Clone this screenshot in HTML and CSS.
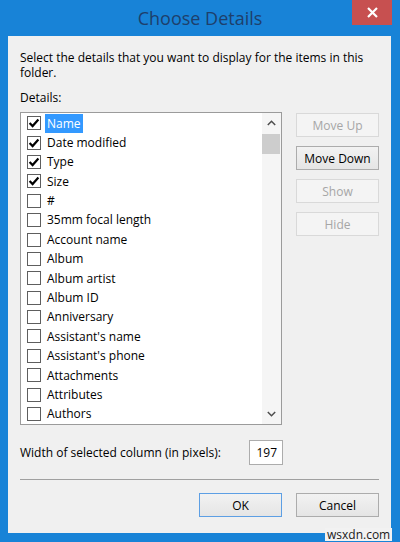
FILE: index.html
```html
<!DOCTYPE html>
<html>
<head>
<meta charset="utf-8">
<title>Choose Details</title>
<link rel="stylesheet" href="styles.css">
</head>
<body>
<div class="window">
  <div class="titlebar">
    <div class="title">Choose Details</div>
    <div class="close">
      <svg width="11" height="11" viewBox="0 0 11 11"><path d="M1 1 L10 10 M10 1 L1 10" stroke="#fff" stroke-width="2.2" fill="none"/></svg>
    </div>
  </div>
  <div class="client">
    <p class="intro">Select the details that you want to display for the items in this folder.</p>
    <div class="label">Details:</div>
    <div class="main">
      <div class="listbox">
        <div class="items">
          <div class="item selected"><span class="box checked"><svg width="12" height="12" viewBox="0 0 12 12"><path d="M1.6 6 L4.6 9.1 L10.4 2.6" stroke="#000" stroke-width="2.2" fill="none"/></svg></span><span class="text">Name</span></div>
          <div class="item"><span class="box checked"><svg width="12" height="12" viewBox="0 0 12 12"><path d="M1.6 6 L4.6 9.1 L10.4 2.6" stroke="#000" stroke-width="2.2" fill="none"/></svg></span><span class="text">Date modified</span></div>
          <div class="item"><span class="box checked"><svg width="12" height="12" viewBox="0 0 12 12"><path d="M1.6 6 L4.6 9.1 L10.4 2.6" stroke="#000" stroke-width="2.2" fill="none"/></svg></span><span class="text">Type</span></div>
          <div class="item"><span class="box checked"><svg width="12" height="12" viewBox="0 0 12 12"><path d="M1.6 6 L4.6 9.1 L10.4 2.6" stroke="#000" stroke-width="2.2" fill="none"/></svg></span><span class="text">Size</span></div>
          <div class="item"><span class="box"></span><span class="text">#</span></div>
          <div class="item"><span class="box"></span><span class="text">35mm focal length</span></div>
          <div class="item"><span class="box"></span><span class="text">Account name</span></div>
          <div class="item"><span class="box"></span><span class="text">Album</span></div>
          <div class="item"><span class="box"></span><span class="text">Album artist</span></div>
          <div class="item"><span class="box"></span><span class="text">Album ID</span></div>
          <div class="item"><span class="box"></span><span class="text">Anniversary</span></div>
          <div class="item"><span class="box"></span><span class="text">Assistant's name</span></div>
          <div class="item"><span class="box"></span><span class="text">Assistant's phone</span></div>
          <div class="item"><span class="box"></span><span class="text">Attachments</span></div>
          <div class="item"><span class="box"></span><span class="text">Attributes</span></div>
          <div class="item"><span class="box"></span><span class="text">Authors</span></div>
        </div>
        <div class="scrollbar">
          <div class="arrow"><svg width="9" height="6" viewBox="0 0 9 6"><path d="M0.8 5 L4.5 1.3 L8.2 5" stroke="#4d4d4d" stroke-width="1.5" fill="none"/></svg></div>
          <div class="track"><div class="thumb"></div></div>
          <div class="arrow"><svg width="9" height="6" viewBox="0 0 9 6"><path d="M0.8 1 L4.5 4.7 L8.2 1" stroke="#4d4d4d" stroke-width="1.5" fill="none"/></svg></div>
        </div>
      </div>
      <div class="side">
        <button class="btn disabled">Move Up</button>
        <button class="btn">Move Down</button>
        <button class="btn disabled">Show</button>
        <button class="btn disabled">Hide</button>
      </div>
    </div>
    <div class="width-row">
      <span>Width of selected column (in pixels):</span>
      <span class="num">197</span>
    </div>
    <div class="sep"></div>
    <div class="footer">
      <button class="btn default">OK</button>
      <button class="btn">Cancel</button>
    </div>
  </div>
  <div class="watermark">wsxdn.com</div>
</div>
</body>
</html>
```
FILE: styles.css
```css
body {
  margin: 0;
  background: #1883d7;
  font-family: "Open Sans", "Noto Sans", sans-serif;
  font-size: 12px;
  color: #000;
}

.window {
  position: relative;
  width: 400px;
  height: 542px;
  background: #1883d7;
  display: flex;
  flex-direction: column;
}

.titlebar {
  height: 36px;
  display: grid;
  grid-template-columns: 1fr auto 1fr;
  align-items: start;
}

.title {
  grid-column: 2;
  font-size: 18px;
  line-height: 36px;
  color: #1e3f6b;
}

.close {
  grid-column: 3;
  justify-self: end;
  margin-right: 8px;
  width: 40px;
  height: 25px;
  background: #c75050;
  display: flex;
  align-items: center;
  justify-content: center;
}

.client {
  margin-left: 8px;
  width: 383px;
  height: 497px;
  box-sizing: border-box;
  padding: 14px 12px 0;
  background: #f0f0f0;
}

.intro {
  margin: 0;
  line-height: 15px;
}

.label {
  margin-top: 10px;
  line-height: 15px;
}

.main {
  display: flex;
  gap: 14px;
  margin-top: 7px;
  align-items: flex-start;
}

.listbox {
  width: 262px;
  height: 313px;
  box-sizing: border-box;
  border: 1px solid #9b9b9b;
  background: #fff;
  display: flex;
}

.items {
  flex: 1;
  overflow: hidden;
  padding-top: 0.5px;
}

.item {
  height: 19.4px;
  display: flex;
  align-items: center;
  padding-left: 6px;
}

.box {
  width: 14px;
  height: 14px;
  box-sizing: border-box;
  border: 1px solid #5e5e5e;
  background: #fff;
  display: flex;
  align-items: center;
  justify-content: center;
  flex: none;
}

.text {
  margin-left: 4px;
  padding: 0 2px;
  line-height: 19.4px;
  white-space: nowrap;
}

.selected .text {
  background: #3399ff;
  color: #fff;
}

.scrollbar {
  width: 19px;
  background: #f5f5f5;
  display: flex;
  flex-direction: column;
}

.arrow {
  height: 20px;
  display: flex;
  align-items: center;
  justify-content: center;
}

.track {
  flex: 1;
}

.thumb {
  height: 20px;
  margin: 1px 1px 0 0;
  background: #cdcdcd;
}

.side {
  width: 83px;
  display: flex;
  flex-direction: column;
  gap: 9px;
  margin-top: 1px;
}

.btn {
  appearance: none;
  margin: 0;
  padding: 0;
  width: 83px;
  height: 24px;
  box-sizing: border-box;
  border: 1px solid #acacac;
  background: linear-gradient(#f2f2f2, #e5e5e5);
  font-family: inherit;
  font-size: 12px;
  color: #000;
}

.btn.disabled {
  border-color: #d9d9d9;
  background: #f4f4f4;
  color: #a6a6a6;
}

.btn.default {
  border-color: #5d9fe4;
}

.width-row {
  width: 263px;
  display: flex;
  justify-content: space-between;
  align-items: center;
  margin-top: 15px;
}

.num {
  width: 34px;
  height: 25px;
  box-sizing: border-box;
  border: 1px solid #acacac;
  background: #fff;
  text-align: right;
  padding-right: 5px;
  line-height: 23px;
}

.sep {
  margin-top: 14px;
  border-top: 1px solid #a0a0a0;
}

.footer {
  display: flex;
  justify-content: flex-end;
  gap: 14px;
  margin-top: 13px;
}

.watermark {
  position: absolute;
  left: 325px;
  top: 528px;
  padding: 0 2px;
  line-height: 13px;
  font-size: 12px;
  color: #1a1a1a;
  background: #f2f2f2;
}
```
